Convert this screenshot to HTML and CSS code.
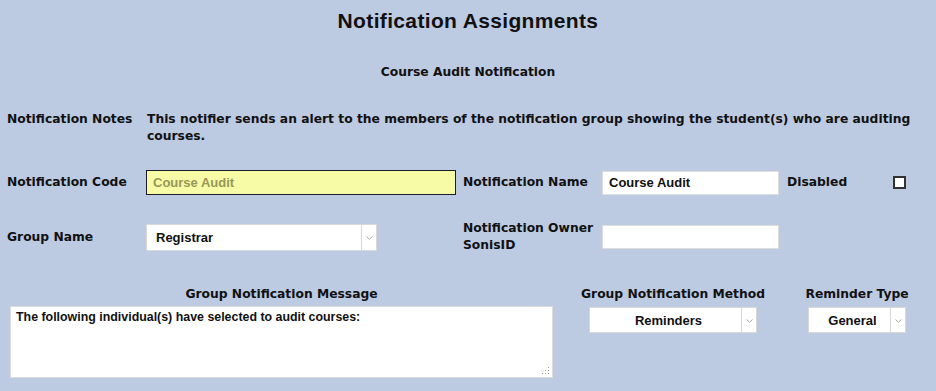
FILE: index.html
```html
<!DOCTYPE html>
<html>
<head>
	<title>Notification Assignments</title>
	<link rel="stylesheet" href="styles.css">
</head>
<body>
	<h1 class="page-title">Notification Assignments</h1>
	<h2 class="sub-title">Course Audit Notification</h2>

	<div class="form-grid">
		<div class="label notes-label">Notification Notes</div>
		<div class="notes-text">This notifier sends an alert to the members of the notification group showing the student(s) who are auditing courses.</div>

		<label class="label" for="code">Notification Code</label>
		<input id="code" class="code-input" type="text" value="Course Audit">
		<label class="label" for="name">Notification Name</label>
		<input id="name" class="text-input" type="text" value="Course Audit">
		<label class="label" for="disabled">Disabled</label>
		<input id="disabled" class="check" type="checkbox">

		<label class="label" for="group">Group Name</label>
		<div class="select-wrap group-select">
			<select id="group"><option>Registrar</option></select>
			<svg class="chev" width="7" height="4" viewBox="0 0 7 4"><path d="M0.5 0.5 L3.5 3.2 L6.5 0.5" fill="none" stroke="#a8a8a8" stroke-width="1"/></svg>
		</div>
		<label class="label owner-label" for="owner">Notification Owner SonisID</label>
		<input id="owner" class="text-input" type="text" value="">
	</div>

	<div class="message-grid">
		<div class="label col-label">Group Notification Message</div>
		<div class="label col-label">Group Notification Method</div>
		<div class="label col-label">Reminder Type</div>

		<div class="message-wrap">
			<textarea class="message-box">The following individual(s) have selected to audit courses:</textarea>
			<svg class="grip" width="7" height="7" viewBox="0 0 7 7" fill="#9a9a9a">
				<rect x="6" y="0" width="1" height="1"/>
				<rect x="3" y="3" width="1" height="1"/>
				<rect x="6" y="3" width="1" height="1"/>
				<rect x="0" y="6" width="1" height="1"/>
				<rect x="3" y="6" width="1" height="1"/>
				<rect x="6" y="6" width="1" height="1"/>
			</svg>
		</div>
		<div class="select-wrap method-select centered">
			<select><option>Reminders</option></select>
			<svg class="chev" width="7" height="4" viewBox="0 0 7 4"><path d="M0.5 0.5 L3.5 3.2 L6.5 0.5" fill="none" stroke="#a8a8a8" stroke-width="1"/></svg>
		</div>
		<div class="select-wrap reminder-select centered">
			<select><option>General</option></select>
			<svg class="chev" width="7" height="4" viewBox="0 0 7 4"><path d="M0.5 0.5 L3.5 3.2 L6.5 0.5" fill="none" stroke="#a8a8a8" stroke-width="1"/></svg>
		</div>
	</div>
</body>
</html>
```

FILE: styles.css
```css
body {
	margin: 0;
	background-color: #BCCAE2;
	color: #111;
	font-family: "DejaVu Sans", Tahoma, sans-serif;
}

.page-title {
	margin: 9px 0 0;
	font: bold 21px/24px "Liberation Sans", Arial, sans-serif;
	letter-spacing: 0.35px;
	text-align: center;
}

.sub-title {
	margin: 31px 0 0;
	font-size: 12.3px;
	font-weight: bold;
	line-height: 16px;
	text-align: center;
}

.label {
	font-size: 12.3px;
	font-weight: bold;
	line-height: 17px;
}

.form-grid {
	display: grid;
	grid-template-columns: 139px 317px 139px 185px 106px 40px;
	row-gap: 25px;
	align-items: center;
	margin-top: 31px;
	padding-left: 7px;
}

.notes-label {
	align-self: start;
}

.notes-text {
	grid-column: 2 / 7;
	padding-left: 1px;
	font-size: 12.3px;
	font-weight: bold;
	line-height: 17px;
}

.owner-label {
	width: 132px;
}

input[type="text"],
textarea,
select {
	box-sizing: border-box;
	font: bold 13px "Liberation Sans", Arial, sans-serif;
	color: #111;
	outline: none;
}

input.code-input {
	width: 310px;
	height: 25px;
	padding: 0 6px;
	border: 1px solid #1c1c28;
	background-color: #F8FBA5;
	color: #97975a;
}

.text-input {
	width: 177px;
	height: 24px;
	padding: 0 6px;
	border: 1px solid #dcdcdc;
	background-color: #fff;
}

.check {
	appearance: none;
	box-sizing: border-box;
	width: 13px;
	height: 13px;
	margin: 0;
	border: 2px solid #333;
	background-color: #fff;
}

.select-wrap {
	position: relative;
}

.select-wrap select {
	appearance: none;
	width: 100%;
	height: 27px;
	padding: 0 18px 0 9px;
	border: 1px solid #d8d8d8;
	border-radius: 0;
	background-color: #fff;
}

.select-wrap::after {
	content: "";
	position: absolute;
	top: 1px;
	bottom: 1px;
	right: 15px;
	border-left: 1px solid #d6d6d6;
}

.select-wrap .chev {
	position: absolute;
	right: 4px;
	top: 12px;
}

.group-select {
	width: 231px;
}

.centered select {
	height: 26px;
	text-align-last: center;
}

.method-select {
	width: 168px;
	margin-top: 1px;
}

.reminder-select {
	width: 98px;
	margin-top: 1px;
}

.message-grid {
	display: grid;
	grid-template-columns: 543px 240px 128px;
	row-gap: 3px;
	justify-items: center;
	align-items: start;
	margin-top: 32px;
	padding-left: 10px;
}

.message-wrap {
	position: relative;
	width: 543px;
	height: 72px;
}

textarea.message-box {
	display: block;
	width: 543px;
	height: 72px;
	margin: 0;
	padding: 3px 5px;
	border: 1px solid #dcdcdc;
	background-color: #fff;
	font-size: 12.4px;
	line-height: 15px;
	resize: none;
}

.message-wrap .grip {
	position: absolute;
	right: 4px;
	bottom: 4px;
}
```
